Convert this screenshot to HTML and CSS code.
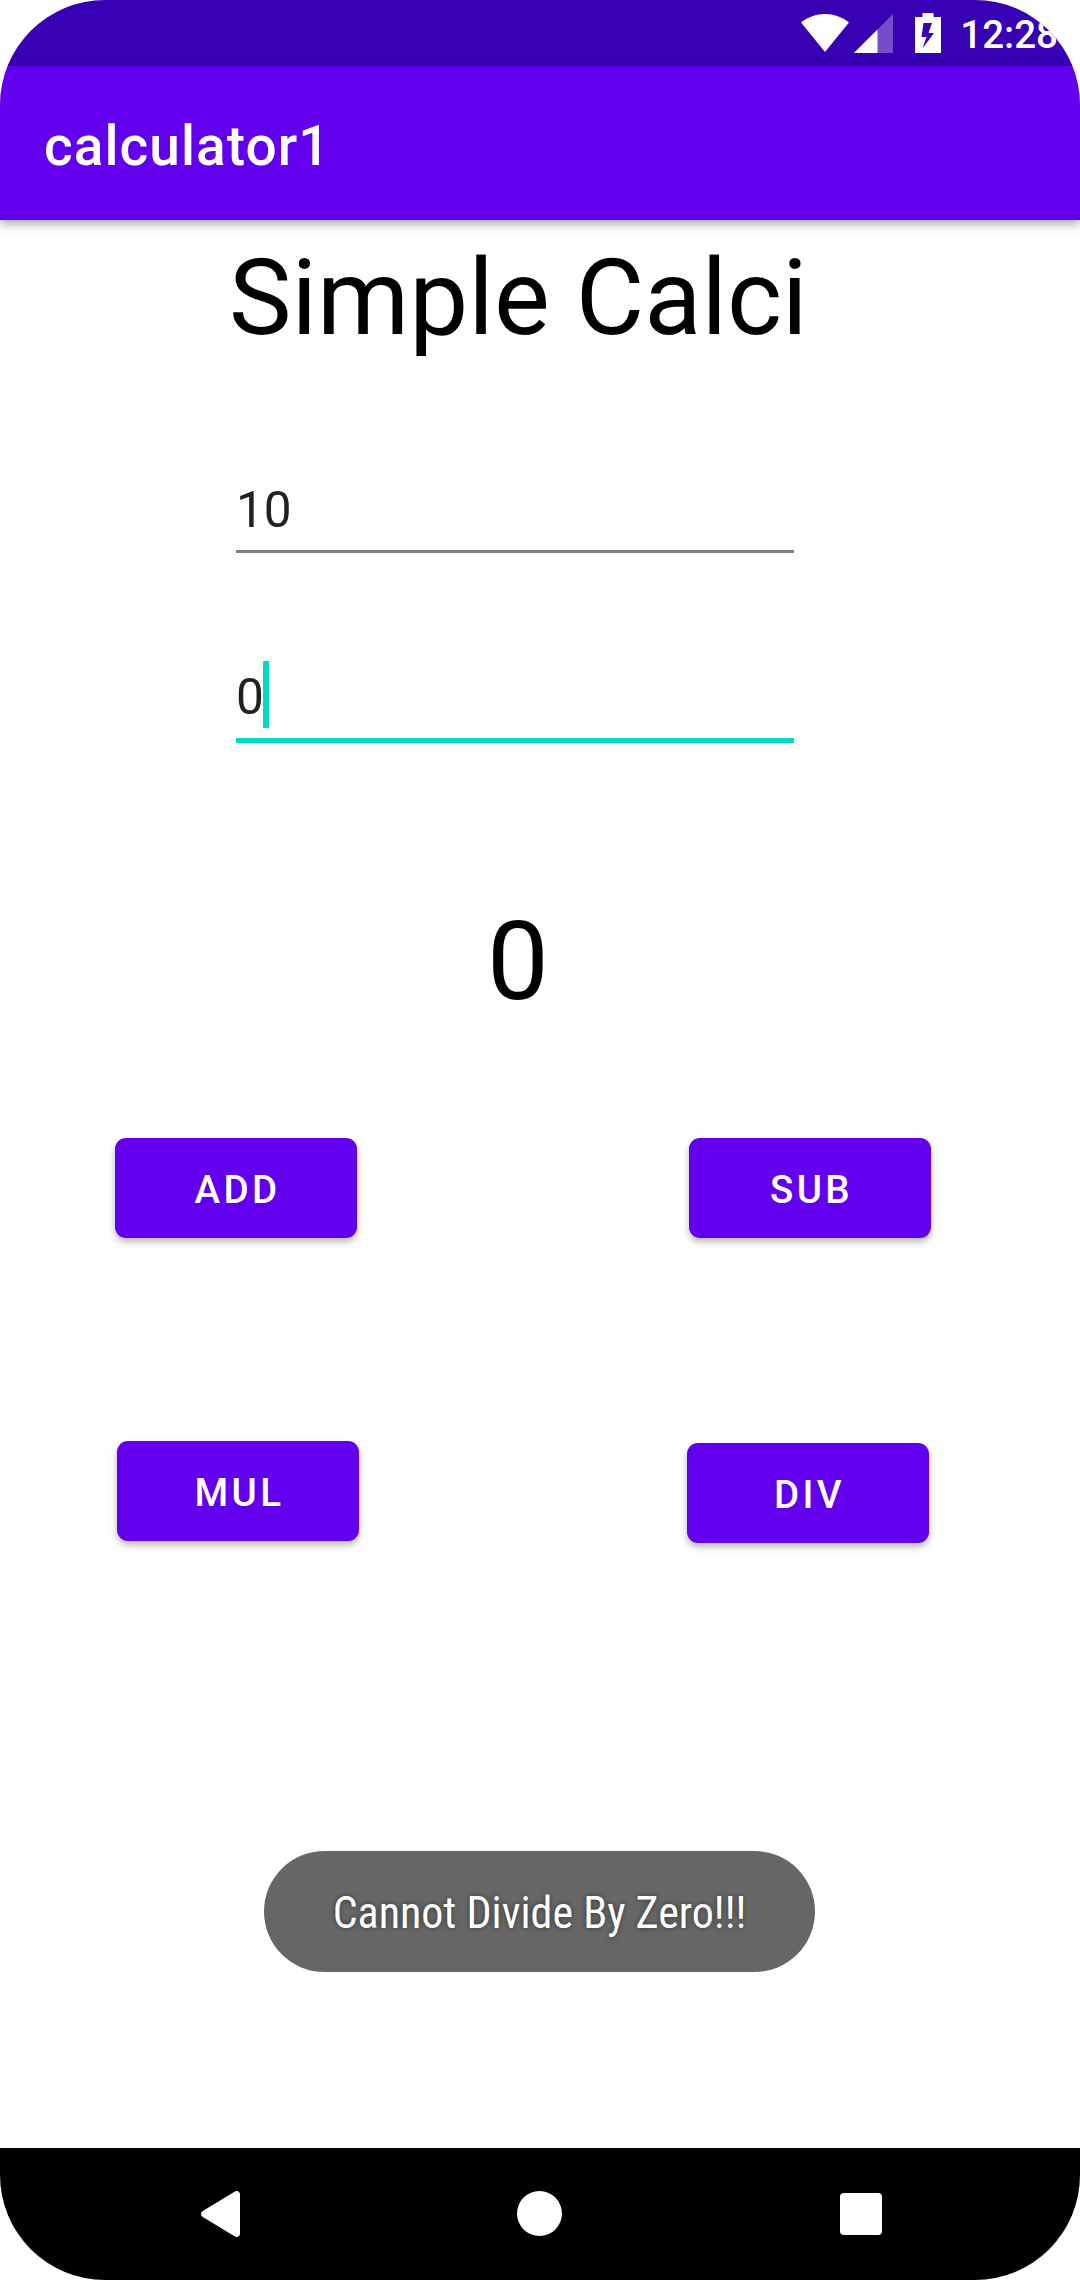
FILE: index.html
```html
<!DOCTYPE html>
<html lang="en">
<head>
<meta charset="utf-8">
<title>calculator1</title>
<link rel="stylesheet" href="styles.css">
</head>
<body>
<div class="screen">
  <div class="status-bar">
    <svg class="wifi" viewBox="0 0 48 38"><path d="M24 38 0 8.500C7 3 15 0 24 0s17 3 24 8.500z"/></svg>
    <svg class="signal" viewBox="0 0 39 39"><path opacity=".3" d="M39 0v39H0z"/><path d="M23.500 15.500V39H0z"/></svg>
    <svg class="battery" viewBox="0 0 26 40"><path fill-rule="evenodd" d="M7.500 0h11v4H26v36H0V4h7.500zM8.500 10 6.500 24h5L7.500 35.500 19 20h-5.500l3.500-10z"/></svg>
    <span class="clock">12:28</span>
  </div>
  <header class="app-bar"><span class="app-title">calculator1</span></header>
  <main class="content">
    <h1 class="heading">Simple Calci</h1>
    <div class="field"><span>10</span></div>
    <div class="field field-focused"><span>0</span><i class="caret"></i></div>
    <div class="result">0</div>
    <div class="keys">
      <button class="key">ADD</button>
      <button class="key">SUB</button>
    </div>
    <div class="keys keys-lower">
      <button class="key">MUL</button>
      <button class="key key-div">DIV</button>
    </div>
  </main>
  <div class="toast"><span class="toast-text">Cannot Divide By Zero!!!</span></div>
  <nav class="nav-bar">
    <svg class="nav-back" viewBox="0 0 39 46"><path d="M33.500.7C36 -.8 39 .5 39 3.500v39c0 3-3 4.300-5.500 2.800L1.800 26C-.6 24.500-.6 21.500 1.800 20z"/></svg>
    <span class="nav-home"></span>
    <span class="nav-recent"></span>
  </nav>
</div>
</body>
</html>
```
FILE: styles.css
```css
body {
  margin: 0;
  background: #fff;
  font-family: Roboto, "Liberation Sans", sans-serif;
}

.screen {
  position: relative;
  display: flex;
  flex-direction: column;
  width: 1080px;
  height: 2280px;
  overflow: hidden;
  border-radius: 105px;
  background: #fff;
}

.status-bar {
  display: flex;
  align-items: center;
  justify-content: flex-end;
  box-sizing: border-box;
  height: 66px;
  padding-right: 22px;
  background: #3700b3;
  color: #fff;
}

.status-bar svg { fill: #fff; }
.wifi { width: 48px; height: 38px; margin-right: 5px; }
.signal { width: 39px; height: 39px; margin-right: 22px; }
.battery { width: 26px; height: 40px; margin-right: 19px; }

.clock {
  padding-top: 3px;
  font-size: 38.5px;
  font-weight: 500;
  line-height: 44px;
}

.app-bar {
  z-index: 1;
  display: flex;
  align-items: center;
  box-sizing: border-box;
  height: 154px;
  padding: 6px 44px 0;
  background: #6200ee;
  color: #fff;
  box-shadow: 0 4px 10px rgba(0, 0, 0, .35);
}

.app-title {
  font-size: 55px;
  font-weight: 500;
  letter-spacing: 1.05px;
}

.content {
  flex: 1;
  display: flex;
  flex-direction: column;
  padding-top: 16px;
}

.heading {
  margin: 0 0 116px 229px;
  color: #000;
  font-size: 105.2px;
  font-weight: 400;
  line-height: 124px;
  white-space: nowrap;
}

.field {
  display: flex;
  box-sizing: border-box;
  width: 558px;
  height: 77px;
  margin-left: 236px;
  border-bottom: 3px solid #7f7f7f;
  color: #212121;
  font-size: 49.5px;
  line-height: 68px;
}

.field-focused {
  height: 80px;
  margin-top: 110px;
  border-bottom: 5px solid #03dac5;
}

.caret {
  width: 6px;
  height: 67px;
  margin: -2px 0 0 -1px;
  background: #03dac5;
}

.result {
  width: 1036px;
  margin: 154px 0 111px;
  color: #000;
  font-size: 110px;
  line-height: 130px;
  text-align: center;
}

.keys {
  display: flex;
  justify-content: space-between;
  align-items: flex-start;
  padding: 0 149px 0 115px;
}

.keys-lower {
  margin-top: 203px;
  padding: 0 151px 0 117px;
}

.key {
  width: 242px;
  height: 100px;
  padding: 4px 0 0 3px;
  border: 0;
  border-radius: 11px;
  background: #6200ee;
  box-shadow: 0 4px 7px rgba(0, 0, 0, .28);
  color: #fff;
  font: 500 38.5px/44px Roboto, "Liberation Sans", sans-serif;
  letter-spacing: .0893em;
}

.key-div { margin-top: 2px; }

.toast {
  position: absolute;
  top: 1851px;
  left: 264px;
  display: flex;
  align-items: center;
  justify-content: center;
  box-sizing: border-box;
  width: 551px;
  height: 121px;
  padding-top: 3px;
  border-radius: 61px;
  background: #666;
}

.toast-text {
  color: #fff;
  font-family: "Roboto Condensed", Roboto, "Liberation Sans Narrow", sans-serif;
  font-size: 44px;
  font-stretch: 75%;
  line-height: 52px;
  text-shadow: 0 0 5px rgba(0, 0, 0, .5);
  white-space: nowrap;
}

.nav-bar {
  display: flex;
  align-items: center;
  justify-content: space-between;
  box-sizing: border-box;
  height: 132px;
  padding: 0 198px 0 201px;
  background: #000;
}

.nav-back { width: 39px; height: 46px; fill: #fff; }
.nav-home { width: 45px; height: 45px; margin: 0 2px 1px 0; border-radius: 50%; background: #fff; }
.nav-recent { width: 42px; height: 42px; border-radius: 4px; background: #fff; }
```
